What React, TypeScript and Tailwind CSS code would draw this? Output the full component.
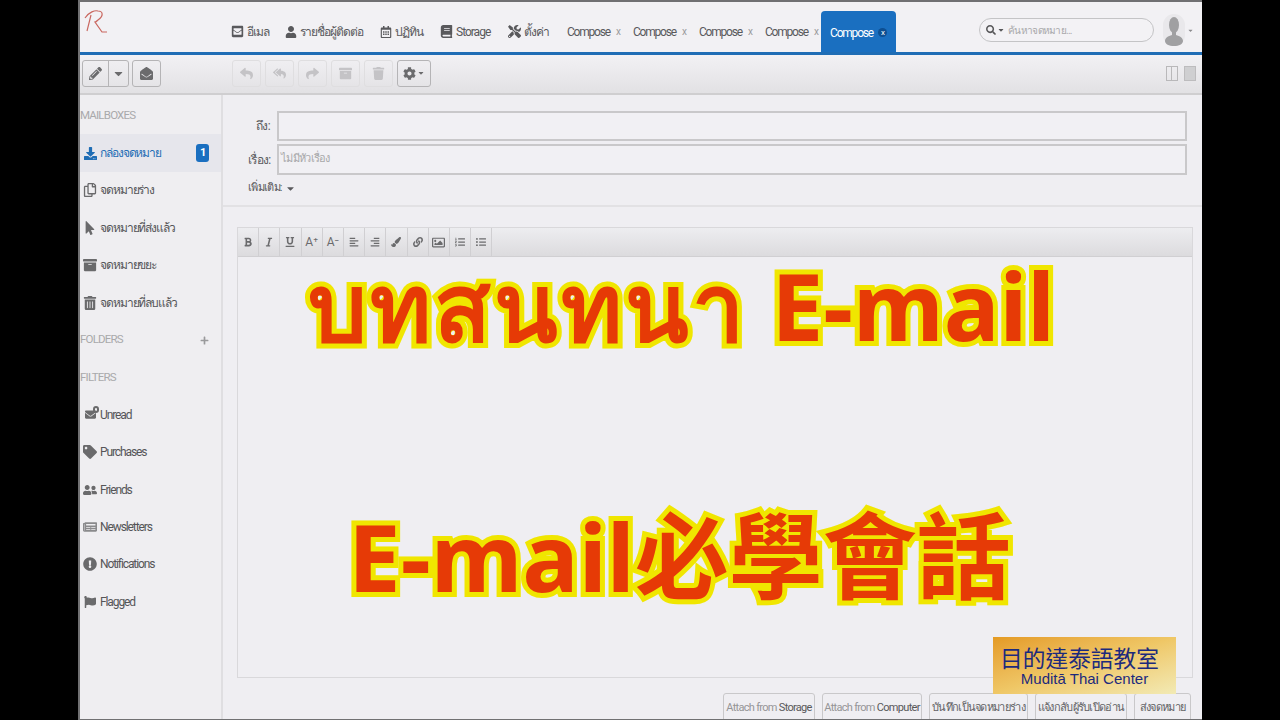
import {
  FaBold, FaCaretDown, FaCog, FaRegCopy, FaDownload, FaEnvelopeOpen, FaExclamationCircle, FaFlag, FaItalic,
  FaLink, FaListOl, FaListUl, FaMousePointer, FaPaintBrush, FaPencilAlt, FaPlus, FaRegImage,
  FaReply, FaReplyAll, FaSearch, FaShare, FaTag, FaTools, FaTrash, FaUnderline, FaUser, FaUserFriends,
  FaEnvelope, FaRegCalendarAlt, FaBook, FaAlignLeft, FaAlignRight, FaTrashAlt, FaArchive, FaEnvelopeSquare, FaNewspaper,
} from "react-icons/fa";

const sans = "font-['Roboto','Liberation_Sans','Noto_Sans',sans-serif]";

const navItems = [
  { label: "อีเมล", w: "w-[54px]", icon: <FaEnvelopeSquare className="text-[13px]" /> },
  { label: "รายชื่อผู้ติดต่อ", w: "w-[95px]", icon: <FaUser className="text-[12px]" /> },
  { label: "ปฏิทิน", w: "w-[60px]", icon: <FaRegCalendarAlt className="text-[12px]" /> },
  { label: "Storage", w: "w-[68px]", icon: <FaBook className="text-[13px]" /> },
  { label: "ตั้งค่า", w: "w-[59px]", icon: <FaTools className="text-[13px]" /> },
];

const mailboxes = [
  { label: "จดหมายร่าง", icon: <FaRegCopy /> },
  { label: "จดหมายที่ส่งแล้ว", icon: <FaMousePointer /> },
  { label: "จดหมายขยะ", icon: <FaArchive /> },
  { label: "จดหมายที่ลบแล้ว", icon: <FaTrashAlt /> },
];

const filters = [
  {
    label: "Unread",
    icon: (
      <span className="relative block">
        <FaEnvelope className="text-[11px]" />
        <span className="absolute -right-[3px] -top-[3px] block h-[7px] w-[6px] rounded-full border-2 border-[#6a6a6c]" />
      </span>
    ),
  },
  { label: "Purchases", icon: <FaTag /> },
  { label: "Friends", icon: <FaUserFriends /> },
  { label: "Newsletters", icon: <FaNewspaper className="text-[#8a8a8c]" /> },
  { label: "Notifications", icon: <FaExclamationCircle /> },
  { label: "Flagged", icon: <FaFlag className="text-[12px]" /> },
];

const editorTools = [
  <FaBold />, <FaItalic />, <FaUnderline />,
  <span className="text-[12px]">A⁺</span>,
  <span className="text-[12px]">A⁻</span>,
  <FaAlignLeft />, <FaAlignRight />, <FaPaintBrush />, <FaLink />, <FaRegImage className="text-[13px]" />, <FaListOl />, <FaListUl />,
];

const captionClass =
  "absolute whitespace-nowrap font-['Noto_Sans','Noto_Sans_CJK_TC',sans-serif] font-bold leading-none text-[#e63a06] [-webkit-text-stroke:10px_#f0e600] [paint-order:stroke_fill]";

function ToolButton({ children, dim }: { children: React.ReactNode; dim?: boolean }) {
  return (
    <div className={`flex h-[27px] w-[29px] items-center justify-center rounded-[3px] border text-[13px] ${dim ? "border-[#dfdee0] text-[#c4c3c6]" : "border-[#b5b4b6] text-[#6b6b6d]"}`}>
      {children}
    </div>
  );
}

function SideRow({ icon, label }: { icon: React.ReactNode; label: string }) {
  return (
    <div className="flex h-[37.4px] items-center gap-[3px] pl-[3px] text-[12px] tracking-[-1.1px] text-[#555558]">
      <span className="flex w-[14px] justify-center text-[14px] text-[#6a6a6c]">{icon}</span>
      <span>{label}</span>
    </div>
  );
}

function SectionLabel({ children }: { children: React.ReactNode }) {
  return <div className="flex h-[37.4px] items-center justify-between pr-[12px] text-[11.5px] tracking-[-0.8px] text-[#a9a9ab]">{children}</div>;
}

export default function App() {
  return (
    <div className={`flex h-screen justify-center overflow-hidden bg-black ${sans}`}>
      <div className="relative flex h-[720px] w-[1124px] flex-col overflow-hidden border-l-2 border-t-2 border-b border-[#707072] bg-[#efeef2]">
        {/* top nav */}
        <header className="flex h-[53px] shrink-0 items-end border-b-[3px] border-[#1f6db5] bg-[#f2f1f4]">
          <svg className="mb-[17px] ml-[3px] h-[28px] w-[26px]" viewBox="0 0 26 28" fill="none" stroke="#c9675f" strokeWidth="1.2">
            <path d="M2 11 C6 5 12 3 15 4 C20 4 21 9 15 13 C13 15 12 15 12 15 L19 25 L24 25" />
            <path d="M8 8 L4 24" />
          </svg>
          <nav className="ml-[122px] flex h-full items-center pt-[9px] text-[12px] tracking-[-1px] text-[#59595c]">
            {navItems.map((item) => (
              <div key={item.label} className={`flex items-center gap-[3px] whitespace-nowrap ${item.w}`}>
                <span className="text-[#59595c]">{item.icon}</span>
                {item.label}
              </div>
            ))}
          </nav>
          <div className="flex h-full items-center pt-[9px] text-[12px] tracking-[-1.2px] text-[#59595c]">
            {[0, 1, 2, 3].map((i) => (
              <div key={i} className="flex w-[66px] items-center last:w-[56px]">
                Compose<span className="ml-[6px] text-[10px] text-[#9a9a9c]">x</span>
              </div>
            ))}
          </div>
          <div className="flex h-[41px] w-[75px] items-center justify-center gap-[5px] rounded-t-[4px] bg-[#1a6fc0] pt-[2px] text-[12px] tracking-[-1.2px] text-white">
            Compose
            <span className="flex h-[9px] w-[9px] items-center justify-center rounded-full bg-[#0d4f92] text-[8px] leading-none">x</span>
          </div>
          <div className="mb-[10px] ml-[83px] flex h-[24px] w-[175px] items-center gap-[1px] rounded-full border border-[#c4c4c6] bg-[#f3f2f5] pl-[6px] text-[10px] tracking-[-0.7px] text-[#a8a8aa]">
            <FaSearch className="text-[10px] text-[#58585a]" />
            <FaCaretDown className="text-[8px] text-[#58585a]" />
            <span className="ml-[2px]">ค้นหาจดหมาย...</span>
          </div>
          <div className="mb-[6px] ml-[9px] flex h-[32px] w-[22px] items-end justify-center rounded-full bg-[#e9e8eb]">
            <svg className="h-[30px] w-[20px]" viewBox="0 0 20 30" fill="#a0a0a2">
              <ellipse cx="10" cy="9" rx="5" ry="8" />
              <path d="M8 16 h4 v3 c4 1 7 3 7 6 c0 3 -4 5 -9 5 s-9 -2 -9 -5 c0 -3 3 -5 7 -6 z" />
            </svg>
          </div>
          <FaCaretDown className="mb-[18px] ml-[2px] text-[7px] text-[#8a8a8c]" />
        </header>

        {/* action toolbar */}
        <div className="flex h-[40px] shrink-0 items-center border-b-2 border-[#cfced0] bg-gradient-to-b from-[#f2f1f4] to-[#e2e1e4] pb-[2px] pr-[6px]">
          <div className="ml-[2px] flex h-[27px] items-center rounded-[3px] border border-[#b5b4b6] text-[#6b6b6d]">
            <div className="flex h-full w-[26px] items-center justify-center border-r border-[#b5b4b6] text-[13px]"><FaPencilAlt /></div>
            <div className="flex h-full w-[19px] items-center justify-center text-[13px]"><FaCaretDown /></div>
          </div>
          <div className="ml-[3px]">
            <ToolButton><FaEnvelopeOpen /></ToolButton>
          </div>
          <div className="ml-[71px] flex gap-[4px]">
            <ToolButton dim><FaReply /></ToolButton>
            <ToolButton dim><FaReplyAll /></ToolButton>
            <ToolButton dim><FaShare /></ToolButton>
            <ToolButton dim><FaArchive /></ToolButton>
            <ToolButton dim><FaTrash /></ToolButton>
          </div>
          <div className="ml-[4px] flex h-[27px] w-[34px] items-center justify-center gap-[1px] rounded-[3px] border border-[#b5b4b6] text-[13px] text-[#6b6b6d]">
            <FaCog /><FaCaretDown className="text-[8px]" />
          </div>
          <div className="ml-auto flex gap-[6px]">
            <div className="flex h-[15px] w-[12px] border border-[#b9b8ba]"><div className="w-[5px] border-r border-[#b9b8ba]" /></div>
            <div className="h-[15px] w-[12px] border border-[#bdbcbe] bg-[#cfcfd1]" />
          </div>
        </div>

        <div className="flex min-h-0 flex-1">
          {/* sidebar */}
          <aside className="w-[143px] shrink-0 border-r-2 border-[#dfdee1] bg-[#efeef1] pt-[2px]">
            <SectionLabel>MAILBOXES</SectionLabel>
            <div className="flex h-[37.4px] items-center gap-[3px] bg-[#e6e6ec] pl-[3px] pr-[12px] text-[12px] tracking-[-1.1px] text-[#1f6db5]">
              <span className="flex w-[14px] justify-center text-[13px]"><FaDownload /></span>
              <span>กล่องจดหมาย</span>
              <span className="ml-auto flex h-[18px] w-[13px] items-center justify-center rounded-[3px] bg-[#1a6fc0] text-[11px] font-bold text-white">1</span>
            </div>
            {mailboxes.map((m) => <SideRow key={m.label} {...m} />)}
            <SectionLabel>FOLDERS<FaPlus className="text-[9px] text-[#9a9a9c]" /></SectionLabel>
            <SectionLabel>FILTERS</SectionLabel>
            {filters.map((f) => <SideRow key={f.label} {...f} />)}
          </aside>

          {/* compose form */}
          <main className="flex min-w-0 flex-1 flex-col">
            <div className="h-[112px] shrink-0 border-b-2 border-[#e2e1e4] pl-[25px] pr-[15px] pt-[16px] text-[12px] tracking-[-0.7px] text-[#59595c]">
              <div className="flex items-center gap-[7px]">
                <span className="w-[22px] text-right">ถึง:</span>
                <div className="h-[30px] flex-1 border-2 border-[#c9c8ca] bg-[#f1f0f4]" />
              </div>
              <div className="mt-[3px] flex items-center gap-[7px]">
                <span className="w-[22px] text-right">เรื่อง:</span>
                <div className="flex h-[31px] flex-1 items-center border-2 border-[#c9c8ca] bg-[#f1f0f4] pl-[2px] text-[11px] text-[#a8a8aa]">ไม่มีหัวเรื่อง</div>
              </div>
              <div className="mt-[5px] flex items-center gap-[3px] text-[11px]">เพิ่มเติม: <FaCaretDown className="text-[11px]" /></div>
            </div>

            <div className="ml-[14px] mr-[9px] mt-[20px] h-[451px] shrink-0 border border-[#d9d8db]">
              <div className="flex h-[29px] items-center border-b border-[#d0cfd2] bg-gradient-to-b from-[#ededf0] to-[#dcdbde] text-[10px] text-[#6b6b6d]">
                {editorTools.map((tool, i) => (
                  <div key={i} className="flex h-full w-[21.2px] items-center justify-center border-r border-[#d0cfd2]">{tool}</div>
                ))}
              </div>
            </div>

            <div className="mr-[11px] mt-[15px] flex justify-end gap-[7px] whitespace-nowrap text-[11px] tracking-[-0.7px] text-[#636366]">
              <div className="flex h-[30px] w-[92px] items-center justify-center rounded-[3px] border border-[#c9c8ca] text-[#58585a]"><span className="text-[#959597]">Attach from&nbsp;</span>Storage</div>
              <div className="flex h-[30px] w-[100px] items-center justify-center rounded-[3px] border border-[#c9c8ca] text-[#58585a]"><span className="text-[#959597]">Attach from&nbsp;</span>Computer</div>
              <div className="flex h-[30px] w-[99px] items-center justify-center rounded-[3px] border border-[#c9c8ca]">บันทึกเป็นจดหมายร่าง</div>
              <div className="flex h-[30px] w-[92px] items-center justify-center rounded-[3px] border border-[#c9c8ca]">แจ้งกลับผู้รับเปิดอ่าน</div>
              <div className="flex h-[30px] w-[57px] items-center justify-center rounded-[3px] border border-[#c9c8ca]">ส่งจดหมาย</div>
            </div>
          </main>
        </div>

        {/* video captions sit over the app */}
        <div className={`${captionClass} left-[228px] top-[257px] text-[93px]`}>
          <span className="tracking-[3px]">บทสนทนา</span> E-mail
        </div>
        <div className={`${captionClass} left-[268px] top-[507px] text-[94px]`}>E-mail必學會話</div>

        {/* watermark */}
        <div className="absolute left-[913px] top-[635px] flex h-[57px] w-[183px] flex-col items-center bg-gradient-to-br from-[#e49a22] via-[#efc766] to-[#f2eab4] pt-[9px] font-['Liberation_Sans',sans-serif] leading-none text-[#1c2a7d]">
          <span className="mr-[10px] font-['Noto_Sans_CJK_TC',sans-serif] text-[22.7px] leading-[24px]">目的達泰語教室</span>
          <span className="text-[15px] leading-[18px]">Muditā Thai Center</span>
        </div>
      </div>
    </div>
  );
}
